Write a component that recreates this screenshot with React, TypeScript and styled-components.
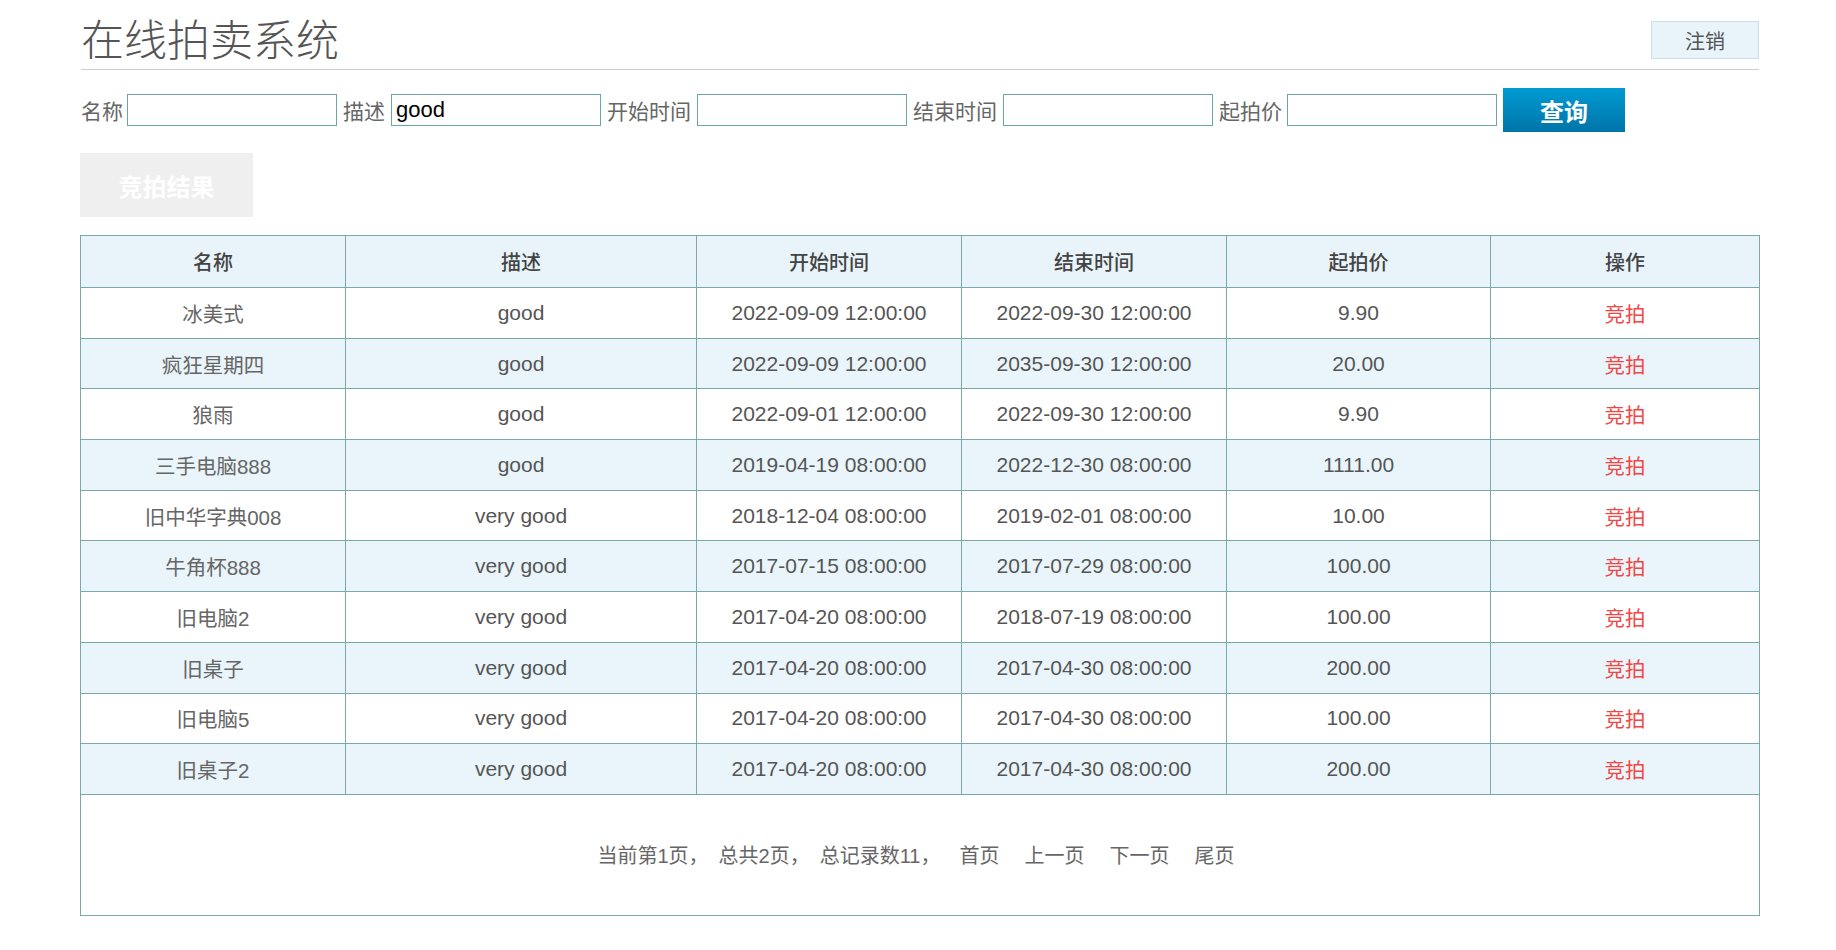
import React from "react";
import styled, { createGlobalStyle } from "styled-components";

const GlobalStyle = createGlobalStyle`
  html, body { margin: 0; padding: 0; background: #fff; }
  body {
    font-family: "Liberation Sans", "Noto Sans CJK SC", sans-serif;
    color: #555;
  }
  * { box-sizing: border-box; }
`;

const Page = styled.div`
  width: 1836px;
  padding: 0 77px 0 80px;
`;

const HeaderBar = styled.header`
  display: flex;
  justify-content: space-between;
  align-items: flex-end;
  margin-left: 1px;
  padding: 16px 0 10px 0;
  border-bottom: 1px solid #cccccc;
`;

const Title = styled.h1`
  margin: 0;
  font-family: "Noto Sans CJK SC", sans-serif;
  font-weight: 300;
  font-size: 43px;
  line-height: 43px;
  color: #555;
`;

const LogoutButton = styled.button`
  width: 108px;
  height: 38px;
  background: #e8f4fa;
  border: 1px solid #c6e0ee;
  color: #555;
  font-family: "Noto Sans CJK SC", sans-serif;
  font-size: 20px;
  padding: 0;
  cursor: pointer;
`;

const SearchRow = styled.form`
  display: flex;
  align-items: center;
  margin: 18px 0 0 1px;
  height: 44px;
`;

const Field = styled.label`
  display: flex;
  align-items: center;
  margin-right: 6px;
`;

const FieldLabel = styled.span<{ $gap: number }>`
  font-family: "Noto Sans CJK SC", sans-serif;
  font-size: 21px;
  line-height: 32px;
  color: #666;
  margin-right: ${(p) => p.$gap}px;
`;

const TextInput = styled.input`
  width: 210px;
  height: 32px;
  border: 1px solid #6ca7a7;
  padding: 0 4px;
  font-family: "Liberation Sans", sans-serif;
  font-size: 22px;
  color: #000;
  outline: none;
`;

const QueryButton = styled.button`
  width: 122px;
  height: 44px;
  border: none;
  padding: 0;
  background: linear-gradient(to bottom, #009bd2, #0074a8);
  color: #fff;
  font-family: "Noto Sans CJK SC", sans-serif;
  font-weight: 700;
  font-size: 24px;
  cursor: pointer;
`;

const ResultTab = styled.div`
  margin-top: 21px;
  width: 173px;
  height: 64px;
  background: #efefef;
  color: #fff;
  display: flex;
  align-items: center;
  justify-content: center;
  font-family: "Noto Sans CJK SC", sans-serif;
  font-weight: 700;
  font-size: 24px;
`;

const Grid = styled.table`
  margin-top: 18px;
  width: 1679px;
  border-collapse: collapse;
  table-layout: fixed;
  border: 1px solid #7aa9a9;
`;

const HeadCell = styled.th`
  height: 52px;
  padding: 0;
  border: 1px solid #7aa9a9;
  background: #e8f4f9;
  font-family: "Noto Sans CJK SC", sans-serif;
  font-weight: 500;
  font-size: 20px;
  color: #444;
  text-align: center;
`;

const BodyRow = styled.tr<{ $striped: boolean }>`
  background: ${(p) => (p.$striped ? "#e9f5fa" : "#ffffff")};
`;

const Cell = styled.td`
  height: 50.7px;
  padding: 0;
  border: 1px solid #7aa9a9;
  text-align: center;
  font-size: 21px;
  color: #555;
`;

const NameText = styled.span`
  color: #666;
  font-size: 20.5px;
`;

const BidLink = styled.a`
  color: #f24646;
  text-decoration: none;
  font-family: "Noto Sans CJK SC", sans-serif;
  font-size: 20.5px;
  cursor: pointer;
`;

const FooterCell = styled.td`
  height: 121px;
  padding: 0;
  border: 1px solid #7aa9a9;
`;

const Pager = styled.div`
  display: flex;
  justify-content: center;
  align-items: center;
  font-size: 20px;
  color: #666;
  padding-right: 8px;
`;

const PagerInfo = styled.span`
  margin-right: 10px;
`;

const PagerLink = styled.a<{ $first?: boolean }>`
  color: #666;
  text-decoration: none;
  margin-left: ${(p) => (p.$first ? 9 : 25)}px;
  cursor: pointer;
`;

type Item = {
  name: string;
  desc: string;
  start: string;
  end: string;
  price: string;
};

const items: Item[] = [
  { name: "冰美式", desc: "good", start: "2022-09-09 12:00:00", end: "2022-09-30 12:00:00", price: "9.90" },
  { name: "疯狂星期四", desc: "good", start: "2022-09-09 12:00:00", end: "2035-09-30 12:00:00", price: "20.00" },
  { name: "狼雨", desc: "good", start: "2022-09-01 12:00:00", end: "2022-09-30 12:00:00", price: "9.90" },
  { name: "三手电脑888", desc: "good", start: "2019-04-19 08:00:00", end: "2022-12-30 08:00:00", price: "1111.00" },
  { name: "旧中华字典008", desc: "very good", start: "2018-12-04 08:00:00", end: "2019-02-01 08:00:00", price: "10.00" },
  { name: "牛角杯888", desc: "very good", start: "2017-07-15 08:00:00", end: "2017-07-29 08:00:00", price: "100.00" },
  { name: "旧电脑2", desc: "very good", start: "2017-04-20 08:00:00", end: "2018-07-19 08:00:00", price: "100.00" },
  { name: "旧桌子", desc: "very good", start: "2017-04-20 08:00:00", end: "2017-04-30 08:00:00", price: "200.00" },
  { name: "旧电脑5", desc: "very good", start: "2017-04-20 08:00:00", end: "2017-04-30 08:00:00", price: "100.00" },
  { name: "旧桌子2", desc: "very good", start: "2017-04-20 08:00:00", end: "2017-04-30 08:00:00", price: "200.00" },
];

const columns = [
  { title: "名称", width: 265 },
  { title: "描述", width: 351 },
  { title: "开始时间", width: 265 },
  { title: "结束时间", width: 265 },
  { title: "起拍价", width: 264 },
  { title: "操作", width: 269 },
];

const fields = [
  { label: "名称", value: "", gap: 4 },
  { label: "描述", value: "good", gap: 6 },
  { label: "开始时间", value: "", gap: 6 },
  { label: "结束时间", value: "", gap: 6 },
  { label: "起拍价", value: "", gap: 5 },
];

export default function App() {
  return (
    <>
      <GlobalStyle />
      <Page>
        <HeaderBar>
          <Title>在线拍卖系统</Title>
          <LogoutButton type="button">注销</LogoutButton>
        </HeaderBar>

        <SearchRow onSubmit={(e) => e.preventDefault()}>
          {fields.map((f) => (
            <Field key={f.label}>
              <FieldLabel $gap={f.gap}>{f.label}</FieldLabel>
              <TextInput type="text" defaultValue={f.value} />
            </Field>
          ))}
          <QueryButton type="submit">查询</QueryButton>
        </SearchRow>

        <ResultTab>竞拍结果</ResultTab>

        <Grid>
          <colgroup>
            {columns.map((c) => (
              <col key={c.title} style={{ width: c.width }} />
            ))}
          </colgroup>
          <thead>
            <tr>
              {columns.map((c) => (
                <HeadCell key={c.title}>{c.title}</HeadCell>
              ))}
            </tr>
          </thead>
          <tbody>
            {items.map((it, i) => (
              <BodyRow key={it.name} $striped={i % 2 === 1}>
                <Cell>
                  <NameText>{it.name}</NameText>
                </Cell>
                <Cell>{it.desc}</Cell>
                <Cell>{it.start}</Cell>
                <Cell>{it.end}</Cell>
                <Cell>{it.price}</Cell>
                <Cell>
                  <BidLink>竞拍</BidLink>
                </Cell>
              </BodyRow>
            ))}
            <tr>
              <FooterCell colSpan={6}>
                <Pager>
                  <PagerInfo>当前第1页，</PagerInfo>
                  <PagerInfo>总共2页，</PagerInfo>
                  <PagerInfo>总记录数11，</PagerInfo>
                  <PagerLink $first>首页</PagerLink>
                  <PagerLink>上一页</PagerLink>
                  <PagerLink>下一页</PagerLink>
                  <PagerLink>尾页</PagerLink>
                </Pager>
              </FooterCell>
            </tr>
          </tbody>
        </Grid>
      </Page>
    </>
  );
}
